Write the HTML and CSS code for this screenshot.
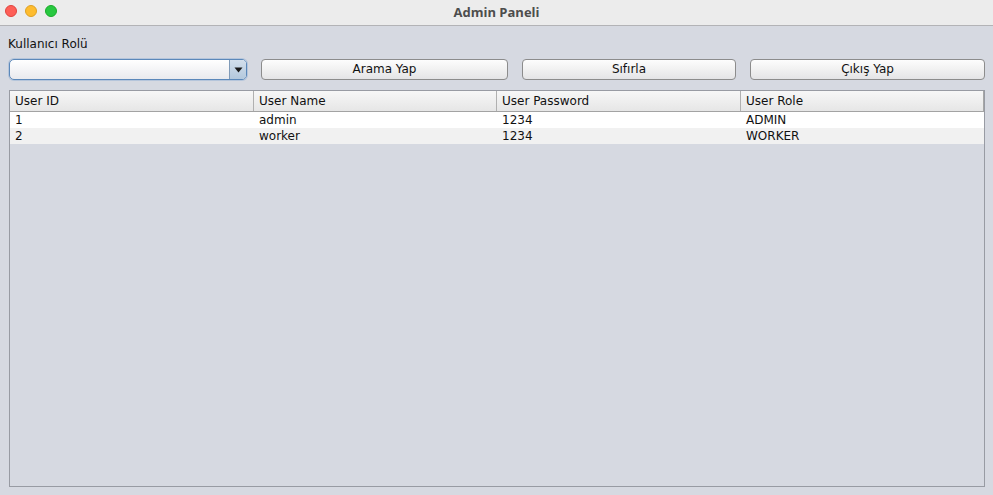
FILE: index.html
```html
<!DOCTYPE html>
<html>
<head>
<meta charset="utf-8">
<link rel="stylesheet" href="styles.css">
</head>
<body>
<div class="window">
  <div class="titlebar">
    <div class="lights">
      <span class="light red"></span>
      <span class="light yellow"></span>
      <span class="light green"></span>
    </div>
    <div class="title">Admin Paneli</div>
  </div>
  <div class="content">
    <div class="label">Kullanıcı Rolü</div>
    <div class="toolbar">
      <div class="combo">
        <div class="combo-field"></div>
        <div class="combo-arrow"><svg width="9" height="6" viewBox="0 0 9 6"><path d="M0.5 0.5 L8.5 0.5 L4.5 5.5 Z" fill="#1a1a1a"/></svg></div>
      </div>
      <button class="btn">Arama Yap</button>
      <button class="btn">Sıfırla</button>
      <button class="btn">Çıkış Yap</button>
    </div>
    <div class="table-wrap">
      <div class="grid header">
        <div class="cell">User ID</div>
        <div class="cell">User Name</div>
        <div class="cell">User Password</div>
        <div class="cell">User Role</div>
      </div>
      <div class="grid row">
        <div class="cell">1</div>
        <div class="cell">admin</div>
        <div class="cell">1234</div>
        <div class="cell">ADMIN</div>
      </div>
      <div class="grid row alt">
        <div class="cell">2</div>
        <div class="cell">worker</div>
        <div class="cell">1234</div>
        <div class="cell">WORKER</div>
      </div>
    </div>
  </div>
</div>
</body>
</html>
```

FILE: styles.css
```css
* { box-sizing: border-box; }
html, body {
  margin: 0;
  padding: 0;
  width: 993px;
  height: 495px;
  overflow: hidden;
  background: #d6d9e1;
  font-family: "DejaVu Sans", "Open Sans", sans-serif;
  font-size: 12px;
  color: #111;
}
.window { width: 993px; height: 495px; display: flex; flex-direction: column; }
.titlebar {
  height: 26px;
  background: #ececec;
  border-bottom: 1px solid #b3b3b6;
  position: relative;
  display: flex;
  align-items: center;
  justify-content: center;
}
.lights {
  position: absolute;
  left: 5px;
  top: 5px;
  display: flex;
  gap: 8px;
}
.light {
  width: 12px;
  height: 12px;
  border-radius: 50%;
  display: block;
}
.red { background: #fe5f57; border: 0.5px solid #e0443e; }
.yellow { background: #febc2e; border: 0.5px solid #dea123; }
.green { background: #28c840; border: 0.5px solid #1aab29; }
.title {
  font-family: "Open Sans", "DejaVu Sans", sans-serif;
  font-weight: 700;
  font-size: 13px;
  color: #4d4d4d;
  margin-top: -2px;
}
.content {
  padding: 10px 8px 8px 9px;
  display: flex;
  flex-direction: column;
  flex: 1;
}
.label {
  font-size: 12px;
  height: 16px;
  line-height: 16px;
  margin-left: -1px;
  color: #111;
}
.toolbar {
  margin-top: 7px;
  display: grid;
  grid-template-columns: 238px 247px 214px 235px;
  column-gap: 14px;
  height: 21px;
}
.combo {
  display: flex;
  border: 1px solid #5b88ba;
  border-radius: 5px;
  overflow: hidden;
  box-shadow: 0 0 0 1px rgba(120,160,210,0.35);
  background: linear-gradient(#ffffff, #e9eaee);
}
.combo-field { flex: 1; }
.combo-arrow {
  width: 17px;
  border-left: 1px solid #7f9ab8;
  background: linear-gradient(#d3dfec, #b3c8dd);
  display: flex;
  align-items: center;
  justify-content: center;
}
.btn {
  font-family: "DejaVu Sans", "Open Sans", sans-serif;
  font-size: 12px;
  color: #111;
  border: 1px solid #8c8c8c;
  border-radius: 4px;
  background: linear-gradient(#fdfdfd, #f1f1f1 50%, #e4e4e6);
  padding: 0;
  height: 21px;
  line-height: 19px;
}
.table-wrap {
  margin-top: 10px;
  width: 976px;
  height: 397px;
  border: 1px solid #989ba3;
  background: #d6d9e1;
}
.grid {
  display: grid;
  grid-template-columns: 244px 243px 244px 243px;
}
.header {
  height: 21px;
  background: linear-gradient(#f7f7f7, #e6e6e6);
  border-bottom: 1px solid #a3a3a3;
}
.header .cell {
  line-height: 20px;
  padding-left: 5px;
  border-right: 1px solid #b0b0b0;
  color: #111;
}
.header .cell:last-child { border-right: 1px solid #a6a6a6; }
.row {
  height: 16px;
  background: #ffffff;
}
.row.alt { background: #f1f1f1; }
.row .cell {
  line-height: 17px;
  padding-left: 5px;
  color: #111;
}
```
